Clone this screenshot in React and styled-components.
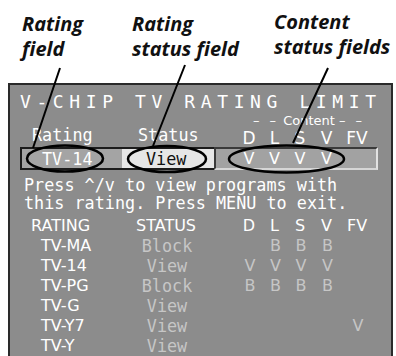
import React from 'react';
import styled, { createGlobalStyle } from 'styled-components';

const GlobalStyle = createGlobalStyle`
  html, body {
    margin: 0;
    padding: 0;
    background: #ffffff;
  }
`;

const Page = styled.div`
  position: relative;
  width: 396px;
  height: 356px;
  overflow: hidden;
  background: #ffffff;
`;

const Callouts = styled.div`
  display: grid;
  grid-template-columns: 110px 142px auto;
  padding-left: 22px;
  height: 83px;
  box-sizing: border-box;
`;

const Label = styled.div`
  font-family: "Open Sans", "DejaVu Sans", sans-serif;
  font-weight: 700;
  font-style: italic;
  font-size: 20px;
  line-height: 25px;
  color: #111111;
  padding-top: ${p => p.top}px;
  white-space: nowrap;
`;

const Screen = styled.div`
  margin-left: 8px;
  width: 385px;
  height: 273px;
  box-sizing: border-box;
  background: #8c8c8c;
  border: 2px solid #2a2a2a;
  border-bottom: none;
  padding-top: 6px;
  display: flex;
  flex-direction: column;
  color: #ffffff;
`;

const Title = styled.div`
  font-family: "DejaVu Sans Mono", monospace;
  font-size: 18px;
  line-height: 22px;
  letter-spacing: 5.6px;
  padding-left: 10px;
  white-space: nowrap;
`;

const HeadRow = styled.div`
  display: flex;
  align-items: flex-end;
  height: 34px;
`;

const Mono = styled.span`
  font-family: "DejaVu Sans Mono", monospace;
  font-size: 16.8px;
  line-height: 18px;
  white-space: nowrap;
  color: ${p => (p.dim ? '#c6c6c6' : p.dark ? '#111111' : '#ffffff')};
`;

const HeadCell = styled.div`
  width: ${p => p.w}px;
  padding-left: ${p => p.pl}px;
  box-sizing: border-box;
  padding-bottom: 3px;
  font-family: "DejaVu Sans Mono", monospace;
  font-size: 16.8px;
  line-height: 18px;
`;

const ContentHead = styled.div`
  margin-left: 38px;
  display: flex;
  flex-direction: column;
`;

const ContentCaption = styled.div`
  font-family: "DejaVu Sans", sans-serif;
  font-size: 13px;
  line-height: 16px;
  text-align: center;
  white-space: nowrap;
  padding-left: 8px;
  span {
    letter-spacing: 3px;
  }
`;

const Cols = styled.div`
  display: grid;
  grid-template-columns: 26px 25px 26px 27px 34px;
  font-family: "DejaVu Sans", sans-serif;
  font-size: ${p => p.size || 16}px;
  line-height: ${p => p.lh || 20}px;
  color: ${p => (p.dim ? '#c6c6c6' : '#ffffff')};
  text-align: center;
`;

const FieldRow = styled.div`
  display: flex;
  margin-left: 10px;
  height: 26px;
`;

const Field = styled.div`
  width: ${p => p.w}px;
  box-sizing: border-box;
  background: ${p => p.bg};
  border-top: 2px solid #1c1c1c;
  border-bottom: 2px solid #1c1c1c;
  border-left: ${p => (p.first ? '2px solid #1c1c1c' : 'none')};
  padding-left: ${p => p.pl}px;
  display: flex;
  align-items: center;
`;

const ContentField = styled.div`
  width: 164px;
  box-sizing: border-box;
  background: #a2a2a2;
  border-top: 2px solid #3a3a3a;
  border-left: 2px solid #3a3a3a;
  border-right: 2px solid #e2e2e2;
  border-bottom: 2px solid #d6d6d6;
  padding-left: 20px;
  display: flex;
  align-items: center;
`;

const Help = styled.div`
  margin-top: 6px;
  padding-left: 14px;
  font-family: "DejaVu Sans Mono", monospace;
  font-size: 16.8px;
  line-height: 18px;
  white-space: nowrap;
`;

const Table = styled.div`
  margin-top: 4px;
  display: flex;
  flex-direction: column;
`;

const Row = styled.div`
  display: flex;
  height: 20px;
  align-items: center;
`;

const RatingCell = styled.div`
  width: 110px;
  box-sizing: border-box;
  padding-left: ${p => (p.head ? 21 : 31)}px;
  font-family: "DejaVu Sans", sans-serif;
  font-size: 16px;
  line-height: 20px;
  white-space: nowrap;
`;

const StatusCell = styled.div`
  width: 92px;
  text-align: center;
  font-family: ${p => (p.head ? '"DejaVu Sans", sans-serif' : '"DejaVu Sans Mono", monospace')};
  font-size: ${p => (p.head ? 16 : 16.8)}px;
  line-height: 20px;
  color: ${p => (p.head ? '#ffffff' : '#c6c6c6')};
  margin-left: ${p => (p.head ? 0 : 1)}px;
`;

const TableCols = styled(Cols)`
  margin-left: 24px;
`;

const Overlay = styled.svg`
  position: absolute;
  left: 0;
  top: 0;
  pointer-events: none;
`;

const cols = ['D', 'L', 'S', 'V', 'FV'];

const rows = [
  { r: 'TV-MA', s: 'Block', c: ['', 'B', 'B', 'B', ''] },
  { r: 'TV-14', s: 'View', c: ['V', 'V', 'V', 'V', ''] },
  { r: 'TV-PG', s: 'Block', c: ['B', 'B', 'B', 'B', ''] },
  { r: 'TV-G', s: 'View', c: ['', '', '', '', ''] },
  { r: 'TV-Y7', s: 'View', c: ['', '', '', '', 'V'] },
  { r: 'TV-Y', s: 'View', c: ['', '', '', '', ''] },
];

const App = () => {
  return (
    <Page>
      <GlobalStyle />
      <Callouts>
        <Label top={11}>Rating<br />field</Label>
        <Label top={11}>Rating<br />status field</Label>
        <Label top={9}>Content<br />status fields</Label>
      </Callouts>
      <Screen>
        <Title>V-CHIP TV RATING LIMIT</Title>
        <HeadRow>
          <HeadCell w={100} pl={22}>Rating</HeadCell>
          <HeadCell w={88} pl={28}>Status</HeadCell>
          <ContentHead>
            <ContentCaption><span>– –</span> Content <span>– –</span></ContentCaption>
            <Cols size={17} lh={18}>
              {cols.map(c => <span key={c}>{c}</span>)}
            </Cols>
          </ContentHead>
        </HeadRow>
        <FieldRow>
          <Field w={102} bg="#a4a4a4" first pl={20}>
            <Mono>TV-14</Mono>
          </Field>
          <Field w={92} bg="#e6e6e6" pl={24}>
            <Mono dark>View</Mono>
          </Field>
          <ContentField>
            <Cols size={16} lh={18}>
              {['V', 'V', 'V', 'V', ''].map((v, i) => <span key={i}>{v}</span>)}
            </Cols>
          </ContentField>
        </FieldRow>
        <Help>
          Press ^/v to view programs with<br />
          this rating. Press MENU to exit.
        </Help>
        <Table>
          <Row>
            <RatingCell head>RATING</RatingCell>
            <StatusCell head>STATUS</StatusCell>
            <TableCols>
              {cols.map(c => <span key={c}>{c}</span>)}
            </TableCols>
          </Row>
          {rows.map(row => (
            <Row key={row.r}>
              <RatingCell>{row.r}</RatingCell>
              <StatusCell>{row.s}</StatusCell>
              <TableCols dim>
                {row.c.map((v, i) => <span key={i}>{v}</span>)}
              </TableCols>
            </Row>
          ))}
        </Table>
      </Screen>
      <Overlay width="396" height="356" viewBox="0 0 396 356">
        <g stroke="#000" strokeWidth="2" fill="none">
          <line x1="60" y1="68" x2="33" y2="148" />
          <line x1="185" y1="65" x2="153" y2="146" />
          <line x1="328" y1="68" x2="293" y2="143" />
        </g>
        <g stroke="#000" strokeWidth="2.5" fill="none">
          <ellipse cx="65" cy="158.5" rx="38" ry="13" />
          <ellipse cx="167" cy="159" rx="39" ry="13" />
          <ellipse cx="286.5" cy="159" rx="57.5" ry="13.5" />
        </g>
      </Overlay>
    </Page>
  );
};

export default App;
